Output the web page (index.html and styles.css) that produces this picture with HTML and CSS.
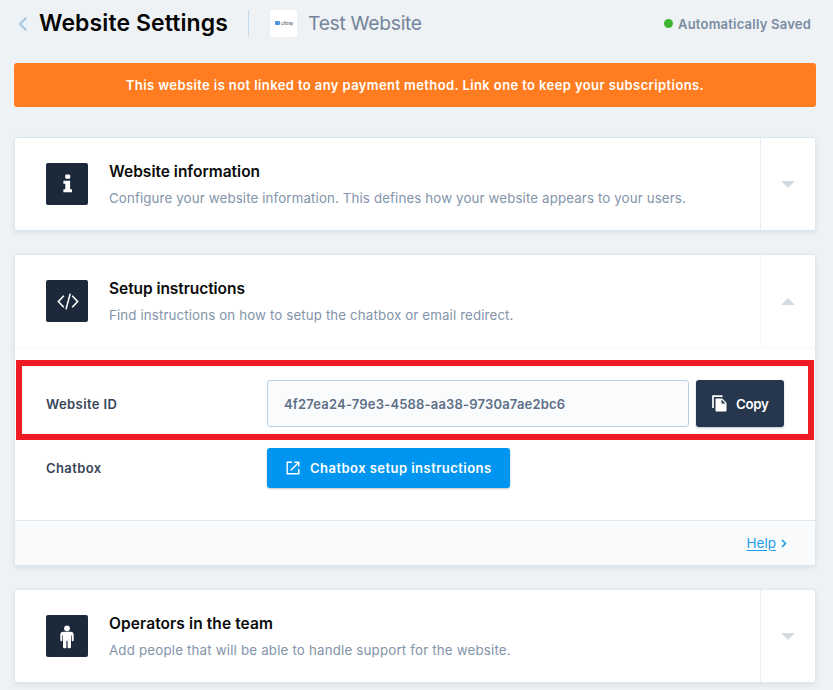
FILE: index.html
```html
<!DOCTYPE html>
<html lang="en">
<head>
<meta charset="utf-8">
<title>Website Settings</title>
<link rel="stylesheet" href="styles.css">
</head>
<body>
<header class="topbar">
  <svg class="back" width="10" height="16" viewBox="0 0 10 16"><path d="M8.3 1.8 2 8l6.3 6.2" fill="none" stroke="#a6c8e6" stroke-width="2.2"/></svg>
  <h1 class="title">Website Settings</h1>
  <span class="rule"></span>
  <span class="logo"><i class="logo-mark"></i><span class="logo-text">Liferay</span></span>
  <span class="site">Test Website</span>
  <span class="saved"><i class="dot"></i>Automatically Saved</span>
</header>
<div class="banner">This website is not linked to any payment method. Link one to keep your subscriptions.</div>

<main class="cards">
  <section class="card">
    <div class="head">
      <span class="icon"><svg width="42" height="42" viewBox="0 0 42 42" fill="#fff"><rect x="19.200" y="11.500" width="5" height="4.300" rx="1.200"/><path d="M17.400 17.800h6.700v8.400h1.900v3h-8.600v-3h1.900v-5.400h-1.900z"/></svg></span>
      <div class="text"><h2 class="name">Website information</h2><p class="desc">Configure your website information. This defines how your website appears to your users.</p></div>
      <span class="toggle"><i class="arrow"></i></span>
    </div>
  </section>

  <section class="card open">
    <div class="head">
      <span class="icon"><svg width="42" height="42" viewBox="0 0 42 42" fill="none" stroke="#fff" stroke-width="1.6"><path d="m17.8 15.8-5.4 5.7 5.4 5.7M26.200 15.800l5.400 5.700-5.400 5.700M24.200 13.600l-4.200 15.800"/></svg></span>
      <div class="text"><h2 class="name setup-name">Setup instructions</h2><p class="desc">Find instructions on how to setup the chatbox or email redirect.</p></div>
      <span class="toggle"><i class="arrow up"></i></span>
    </div>
    <div class="body">
      <div class="row id-row">
        <span class="label">Website ID</span>
        <span class="field">4f27ea24-79e3-4588-aa38-9730a7ae2bc6</span>
        <span class="btn copy"><svg width="15" height="17" viewBox="0 0 15 17"><path d="M1 13V1.200h9.500" fill="none" stroke="#fff" stroke-width="1.700"/><path d="M4 3.600h6.300l4.200 4.200v7.600a1 1 0 0 1-1 1H4.500a1 1 0 0 1-1-1V4.100z" fill="#fff"/><path d="M9.500 4.600v4h4z" fill="#25364d"/></svg>Copy</span>
      </div>
      <div class="row">
        <span class="label">Chatbox</span>
        <span class="btn setup"><svg width="14" height="14" viewBox="0 0 14 14" fill="none" stroke="#fff" stroke-width="1.400"><path d="M6 1.200H1.200v11.600h11.600V8M8.400 1.200h4.400v4.400M12.600 1.400 4.600 9.400"/></svg>Chatbox setup instructions</span>
      </div>
    </div>
    <div class="foot"><a class="help">Help</a><svg width="6" height="9" viewBox="0 0 6 9"><path d="m1 1 3.500 3.500L1 8" fill="none" stroke="#1c9df0" stroke-width="1.600"/></svg></div>
    <div class="highlight"></div>
  </section>

  <section class="card">
    <div class="head">
      <span class="icon"><svg width="42" height="42" viewBox="0 0 42 42" fill="#fff"><circle cx="21" cy="13.300" r="2.900"/><path d="M17.500 16.800h7a3.200 3.200 0 0 1 3.200 3.200v5.200a1 1 0 0 1-2 0v-4.800h-.700V32a1.300 1.300 0 0 1-1.300 1.300h-1.100a1 1 0 0 1-1-1v-6.500h-1.200v6.500a1 1 0 0 1-1 1h-1.100A1.300 1.300 0 0 1 17 32V20.400h-.700v4.800a1 1 0 0 1-2 0V20a3.200 3.200 0 0 1 3.200-3.200z"/></svg></span>
      <div class="text"><h2 class="name team-name">Operators in the team</h2><p class="desc team-desc">Add people that will be able to handle support for the website.</p></div>
      <span class="toggle"><i class="arrow"></i></span>
    </div>
  </section>
</main>
</body>
</html>
```
FILE: styles.css
```css
* { box-sizing: border-box; }
body {
  margin: 0;
  height: 690px;
  overflow: hidden;
  padding: 0 17px 0 14px;
  background: #eef2f5;
  font-family: Inter, "Liberation Sans", sans-serif;
}
h1, h2, p { margin: 0; }

.topbar { display: flex; align-items: center; height: 46px; padding-left: 4px; }
.back { margin-top: 1px; }
.title { margin-left: 11px; width: 191px; font-size: 23px; font-weight: 600; letter-spacing: .1px; line-height: 28px; color: #050505; white-space: nowrap; }
.rule { width: 1px; height: 27px; margin-left: 18px; background: #c5dbeb; }
.logo { display: flex; align-items: center; width: 27px; height: 27px; margin-left: 21px; padding-left: 5px; border-radius: 2px; background: #fff; }
.logo-mark { width: 5px; height: 4px; border-radius: 1px; background: #5094e2; }
.logo-text { margin-left: 1px; font-size: 4px; line-height: 5px; letter-spacing: -.2px; font-weight: 600; color: #6b7687; }
.site { margin-left: 11px; font-size: 19.300px; letter-spacing: -.3px; line-height: 26px; color: #74859b; white-space: nowrap; }
.saved { display: flex; align-items: center; margin-left: auto; margin-right: 5px; font-size: 13px; font-weight: 600; letter-spacing: .22px; color: #7a8ba1; white-space: nowrap; padding-top: 2px; }
.dot { width: 9px; height: 9px; margin: -2px 5px 0 0; border-radius: 50%; background: #3fb62f; }

.banner {
  height: 44px;
  margin-top: 17px;
  border-radius: 3px;
  background: #ff7d20;
  color: #fff;
  font-size: 13px;
  font-weight: 600;
  letter-spacing: .4px;
  line-height: 44px;
  text-align: center;
}

.cards { display: flex; flex-direction: column; gap: 23px; margin-top: 30px; }
.card { position: relative; border: 1px solid #dce7ef; border-radius: 2px; background: #fff; box-shadow: 0 2px 5px rgba(60, 90, 120, .1); }
.head { display: flex; height: 92px; }
.open .head { height: 93px; border-bottom: 1px solid #f5f7f9; }
.icon { width: 42px; height: 42px; margin: 25px 0 0 31px; border-radius: 2px; background: #1c293b; }
.icon svg { display: block; }
.text { flex: 1; padding: 23px 0 0 21px; white-space: nowrap; }
.name { font-size: 15.500px; font-weight: 600; line-height: 22px; letter-spacing: 0; color: #0b0b0b; }
.setup-name { letter-spacing: -.06px; }
.team-name { letter-spacing: .1px; }
.desc { margin-top: 5px; font-size: 13.300px; line-height: 20px; letter-spacing: .13px; color: #8394aa; }
.team-desc { letter-spacing: .19px; }
.toggle { display: flex; align-items: center; justify-content: center; width: 56px; margin-right: -1px; border-left: 1px solid #e6eef4; }
.open .toggle { border-color: #f3f6f8; }
.arrow { margin-right: 1px; border: 7px solid transparent; border-top-color: #d3dbe1; border-bottom: 0; }
.arrow.up { border-top: 0; border-bottom: 7px solid #d3dbe1; }

.body { height: 172px; padding: 32px 31px 0; }
.row { display: flex; align-items: center; }
.id-row { margin-bottom: 21px; }
.label { width: 221px; font-size: 13px; font-weight: 600; letter-spacing: .4px; color: #374559; }
.field { width: 422px; height: 47px; padding-left: 16px; border: 1px solid #b7d0e7; border-radius: 3px; background: #f9fbfd; color: #5e6f86; font-size: 13px; font-weight: 600; letter-spacing: .18px; line-height: 46px; }
.btn { display: flex; align-items: center; border-radius: 3px; color: #fff; font-weight: 600; white-space: nowrap; box-shadow: 0 1px 2px rgba(30, 60, 90, .3); }
.copy { width: 88px; height: 47px; margin-left: 7px; padding-left: 16px; gap: 9px; background: #25364d; font-size: 13.300px; letter-spacing: -.3px; }
.setup { width: 243px; height: 40px; padding-left: 19px; gap: 10px; background: #0095f0; font-size: 13px; letter-spacing: .46px; }

.foot { display: flex; align-items: center; justify-content: flex-end; gap: 5px; height: 45px; padding-right: 28px; border-top: 1px solid #dde7ef; background: #f8fafc; }
.help { color: #1c9df0; font-size: 13.500px; text-decoration: underline; text-underline-offset: 2px; }
.highlight { position: absolute; top: 105px; left: 1px; width: 798px; height: 80px; border: 6px solid #ee1c25; }
```
